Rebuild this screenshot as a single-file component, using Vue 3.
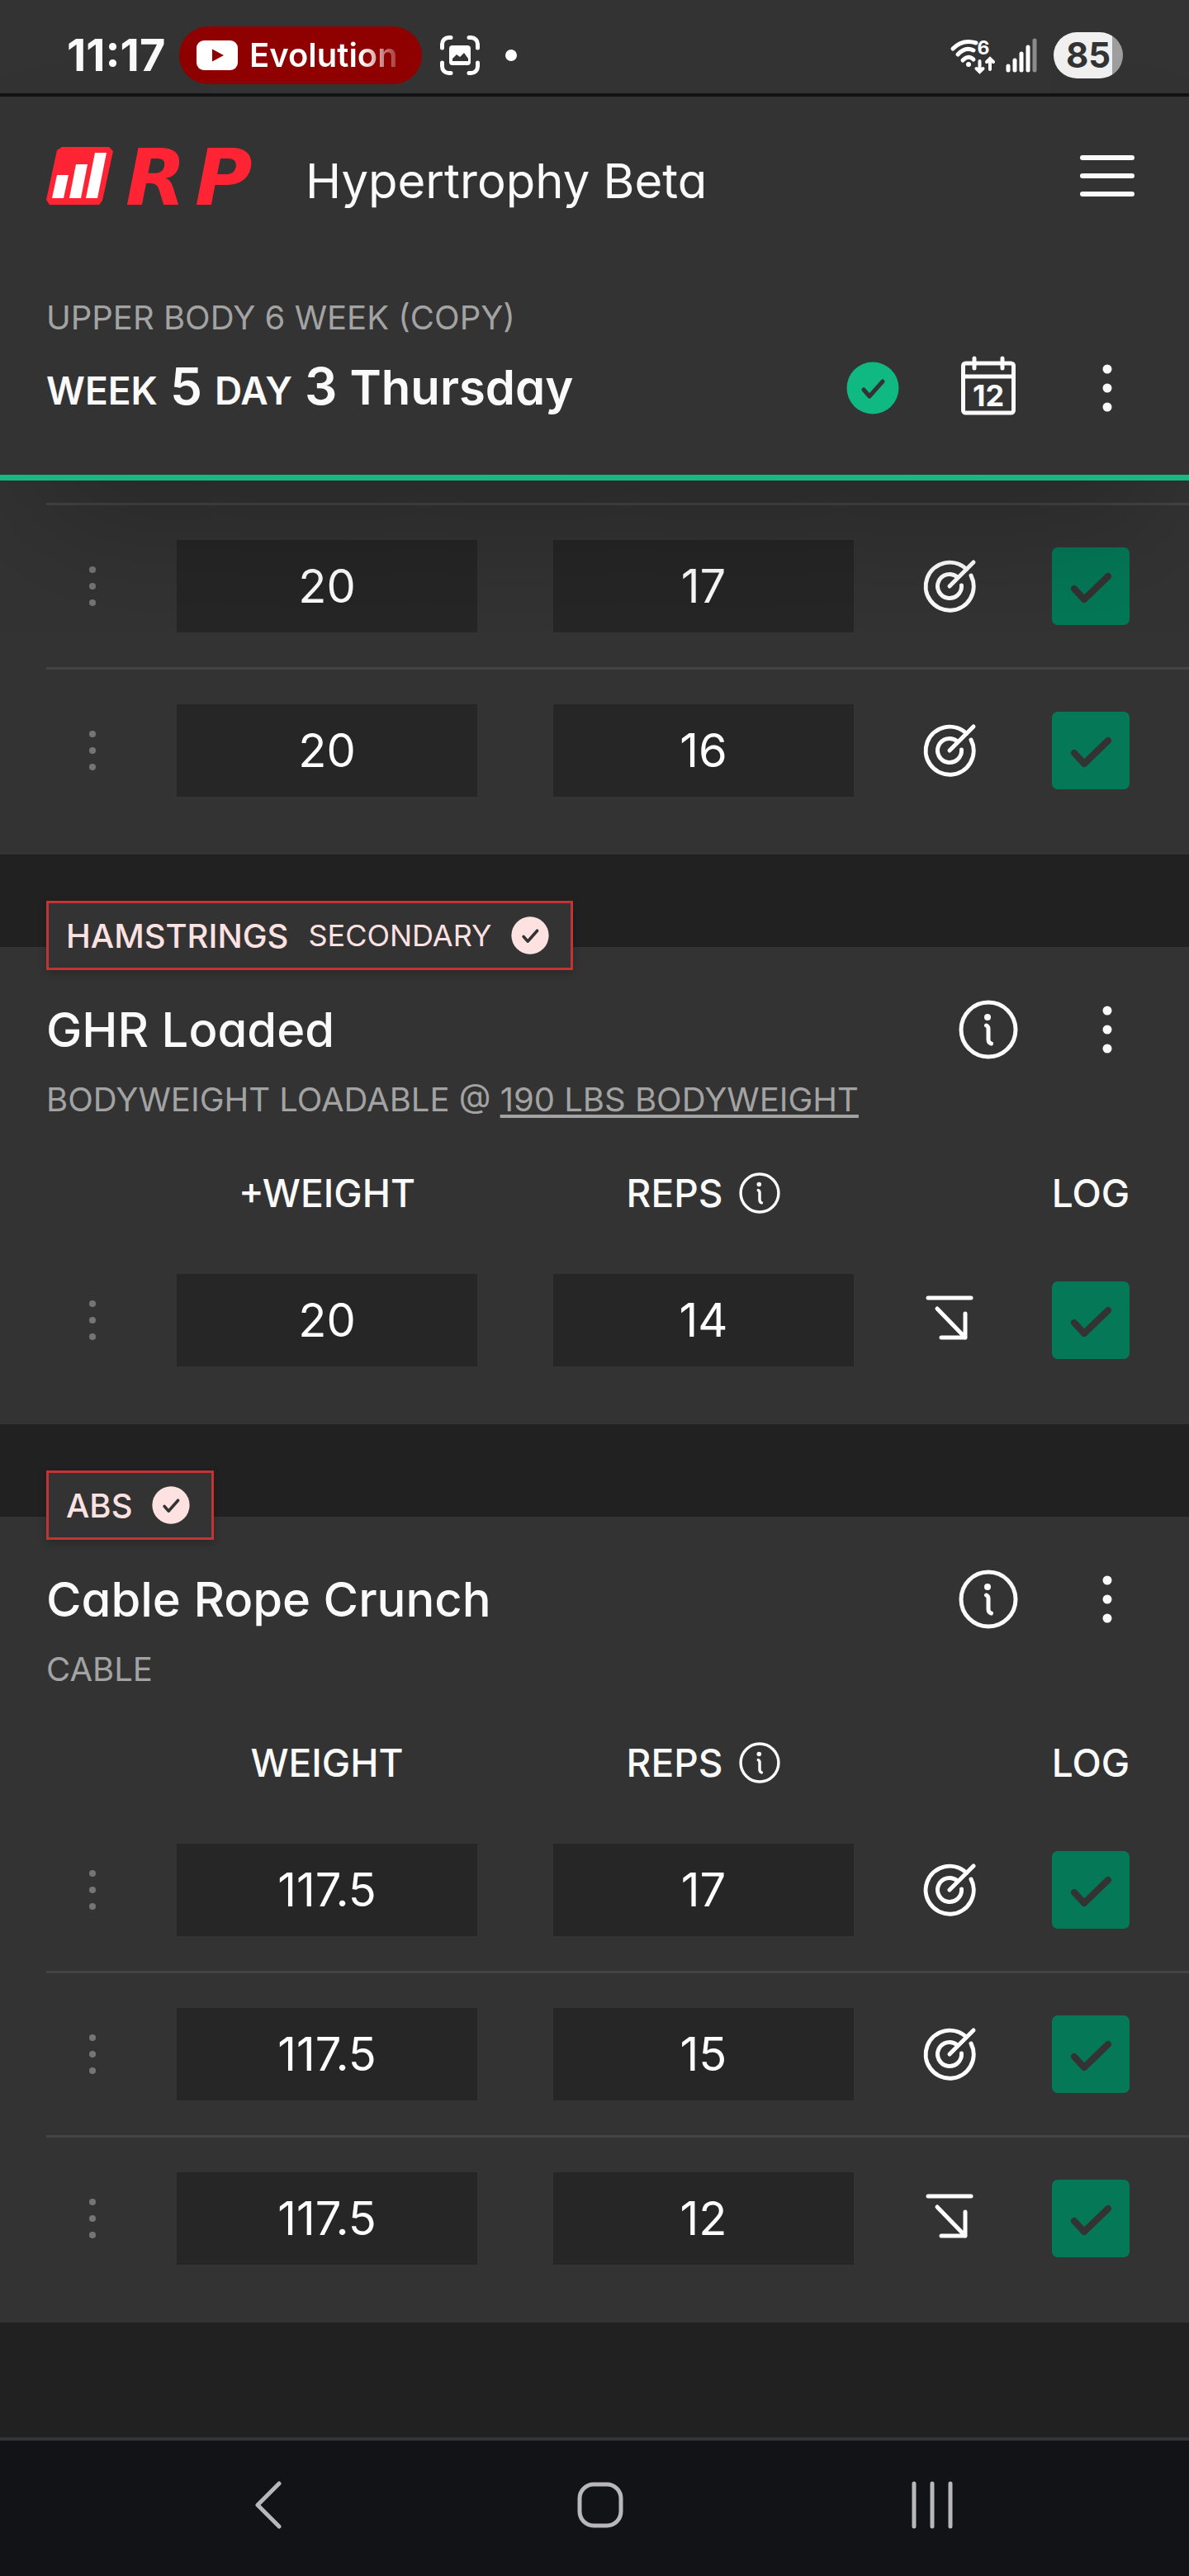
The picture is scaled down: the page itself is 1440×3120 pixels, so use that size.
<script setup>
import { reactive } from "vue";

const previousSets = reactive([
  { weight: "20", reps: "17", result: "target", done: true },
  { weight: "20", reps: "16", result: "target", done: true },
]);

const exercises = reactive([
  {
    id: "ghr",
    muscle: "Hamstrings",
    role: "Secondary",
    name: "GHR Loaded",
    equipment: "Bodyweight loadable @",
    bodyweight: "190 lbs bodyweight",
    weightLabel: "+Weight",
    sets: [{ weight: "20", reps: "14", result: "below", done: true }],
  },
  {
    id: "crunch",
    muscle: "Abs",
    name: "Cable Rope Crunch",
    equipment: "Cable",
    weightLabel: "Weight",
    sets: [
      { weight: "117.5", reps: "17", result: "target", done: true },
      { weight: "117.5", reps: "15", result: "target", done: true },
      { weight: "117.5", reps: "12", result: "below", done: true },
    ],
  },
]);

const blocks = [{ id: "previous", continued: true, sets: previousSets }, ...exercises];

const signalBars = [
  { x: 3, top: 36 },
  { x: 11, top: 29 },
  { x: 19, top: 21 },
  { x: 27, top: 13 },
  { x: 35, top: 5, dim: true },
];
</script>

<template>
  <div class="page">
    <!-- Phone status bar -->
    <div class="status-bar">
      <span class="clock">11:17</span>
      <div class="media-pill">
        <svg viewBox="0 0 50 36" class="media-icon">
          <rect width="50" height="36" rx="9" fill="#fff" />
          <path d="M19 10.5 L33 18 L19 25.5 Z" fill="#8f0000" />
        </svg>
        <span class="media-title">Evolution</span>
      </div>
      <svg viewBox="0 0 48 48" class="capture-icon">
        <path
          d="M2.5 15 V10.5 A8 8 0 0 1 10.5 2.5 H13 M35 2.5 H37.5 A8 8 0 0 1 45.5 10.5 V15 M45.5 33 V37.5 A8 8 0 0 1 37.5 45.5 H35 M13 45.5 H10.5 A8 8 0 0 1 2.5 37.5 V33"
          fill="none"
          stroke="#fff"
          stroke-width="5"
          stroke-linecap="round"
        />
        <rect x="11" y="12" width="26" height="24" rx="4" fill="#fff" />
        <path d="M15 31 V28 L20 23 L24 26 L29 21 L34 28 V31 Z" fill="#333" />
      </svg>
      <span class="notice-dot"></span>

      <div class="status-right">
        <svg viewBox="0 0 60 50" class="wifi-icon">
          <g fill="none" stroke="#fff" stroke-width="5" stroke-linecap="round">
            <path d="M6 17 Q18 5 34 10" />
            <path d="M12 24 Q21 14 31 19" />
            <path d="M18 31 Q25 24 31 30" />
            <path d="M38.5 32 V44 M34.5 41 L38.5 45 L42.5 41" stroke-width="4" />
            <path d="M51 42 V30 M47 33 L51 29 L55 33" stroke-width="4" />
          </g>
          <circle cx="25" cy="36" r="3" fill="#fff" />
          <text x="43" y="24" text-anchor="middle" class="wifi-gen">6</text>
        </svg>
        <svg viewBox="0 0 38 50" class="signal-icon">
          <path
            v-for="bar in signalBars"
            :key="bar.x"
            :d="`M${bar.x} ${bar.top + 2} V43`"
            :stroke="bar.dim ? '#8c8c8c' : '#fff'"
            stroke-width="5"
            stroke-linecap="round"
          />
        </svg>
        <span class="battery">85</span>
      </div>
    </div>

    <header class="top">
      <!-- App bar -->
      <div class="app-bar">
        <a href="#" class="logo" aria-label="RP">
          <svg viewBox="0 0 260 70" class="logo-svg">
            <path
              d="M19 0 H76 L81 5 L68 65 L64 70 H4 L0 64 L13 4 Z"
              fill="#ff2433"
            />
            <path
              d="M13 34 H27 L21 62 H7 Z M36 21 H50 L42 62 H28 Z M59 7 H73 L62 62 H48 Z"
              fill="#fff"
            />
            <text x="96" y="70" class="logo-text">R</text>
            <text x="180" y="70" class="logo-text">P</text>
          </svg>
        </a>
        <h1 class="app-title">Hypertrophy Beta</h1>
        <button type="button" class="icon-btn" aria-label="Menu">
          <svg viewBox="-36 -36 72 72" class="icon">
            <path
              d="M-30 -22 H30 M-30 0 H30 M-30 22 H30"
              stroke="currentColor"
              stroke-width="6"
              stroke-linecap="round"
            />
          </svg>
        </button>
      </div>

      <!-- Current workout -->
      <div class="workout">
        <p class="plan">Upper Body 6 Week (copy)</p>
        <div class="workout-row">
          <h2 class="day">
            <span class="unit">Week</span>
            <span class="count">5</span>
            <span class="unit">Day</span>
            <span class="count">3</span>
            <span>Thursday</span>
          </h2>
          <svg viewBox="-32 -32 64 64" class="day-done">
            <circle r="31.5" fill="#10b981" />
            <path d="M-11 2 L-4 10 L12 -8" class="tick" />
          </svg>
          <button type="button" class="icon-btn" aria-label="Calendar">
            <svg viewBox="0 0 72 72" class="icon">
              <g fill="none" stroke="currentColor" stroke-width="5" stroke-linecap="round">
                <rect x="5.5" y="6" width="61" height="60" rx="3" />
                <path d="M6 22 H66" />
                <path d="M19 0 V12 M53 0 V12" />
              </g>
              <text x="36" y="58" text-anchor="middle" class="calendar-day">12</text>
            </svg>
          </button>
          <button type="button" class="icon-btn" aria-label="Workout options">
            <svg viewBox="-36 -36 72 72" class="icon" fill="currentColor">
              <circle cy="-23" r="5.5" />
              <circle r="5.5" />
              <circle cy="23" r="5.5" />
            </svg>
          </button>
        </div>
      </div>
    </header>

    <main class="exercises">
      <section
        v-for="block in blocks"
        :key="block.id"
        class="exercise"
        :class="{ continued: block.continued }"
      >
        <template v-if="!block.continued">
          <div class="badge">
            <span class="muscle">{{ block.muscle }}</span>
            <span v-if="block.role" class="role">{{ block.role }}</span>
            <svg viewBox="-32 -32 64 64" class="badge-check">
              <circle r="31.5" fill="#fee2e2" />
              <path d="M-11 2 L-4 10 L12 -8" class="tick" />
            </svg>
          </div>

          <div class="exercise-head">
            <h3 class="exercise-name">{{ block.name }}</h3>
            <button type="button" class="icon-btn" aria-label="Exercise info">
              <svg viewBox="-36 -36 72 72" class="icon">
                <g fill="none" stroke="currentColor" stroke-width="5" stroke-linecap="round">
                  <circle r="33" />
                  <path d="M-2.5 -5 Q0 -4 0 -1 V12 Q0 16 3.5 17" />
                </g>
                <circle cx="-1" cy="-15" r="4" fill="currentColor" />
              </svg>
            </button>
            <button type="button" class="icon-btn" aria-label="Exercise options">
              <svg viewBox="-36 -36 72 72" class="icon" fill="currentColor">
                <circle cy="-23" r="5.5" />
                <circle r="5.5" />
                <circle cy="23" r="5.5" />
              </svg>
            </button>
          </div>
          <p class="equipment">
            {{ block.equipment }}
            <a v-if="block.bodyweight" href="#">{{ block.bodyweight }}</a>
          </p>
        </template>

        <table class="sets">
          <colgroup>
            <col class="col-drag" />
            <col />
            <col />
            <col class="col-result" />
            <col class="col-log" />
          </colgroup>
          <thead v-if="!block.continued">
            <tr>
              <td></td>
              <th scope="col">{{ block.weightLabel }}</th>
              <th scope="col">
                <span class="reps-label">
                  Reps
                  <svg viewBox="-36 -36 72 72" class="icon-small">
                    <g fill="none" stroke="currentColor" stroke-width="5" stroke-linecap="round">
                      <circle r="33" />
                      <path d="M-2.5 -5 Q0 -4 0 -1 V12 Q0 16 3.5 17" />
                    </g>
                    <circle cx="-1" cy="-15" r="4" fill="currentColor" />
                  </svg>
                </span>
              </th>
              <td></td>
              <th scope="col" class="log-cell">Log</th>
            </tr>
          </thead>
          <tbody>
            <tr v-for="(set, i) in block.sets" :key="i">
              <td>
                <svg viewBox="-36 -36 72 72" class="icon drag">
                  <circle cy="-20" r="4" />
                  <circle r="4" />
                  <circle cy="20" r="4" />
                </svg>
              </td>
              <td class="field-cell">
                <input v-model="set.weight" type="text" class="field" aria-label="Weight" />
              </td>
              <td class="field-cell">
                <input v-model="set.reps" type="text" class="field" aria-label="Reps" />
              </td>
              <td>
                <svg viewBox="-36 -36 72 72" class="icon result">
                  <template v-if="set.result === 'target'">
                    <path d="M26 -13 A29 29 0 1 1 20.5 -20.5" />
                    <path d="M14.5 -1 A14.5 14.5 0 1 1 9 -11.4" />
                    <path d="M0 0 L29 -29" />
                  </template>
                  <template v-else>
                    <path d="M-26 -27 H26" />
                    <path d="M-15 -14 L19 21 M19 -8 V21 H-10" />
                  </template>
                </svg>
              </td>
              <td class="log-cell">
                <label class="log">
                  <input v-model="set.done" type="checkbox" aria-label="Log set" />
                  <svg v-if="set.done" viewBox="0 0 94 94" class="log-tick">
                    <path d="M27 50 L39 63 L68 35" />
                  </svg>
                </label>
              </td>
            </tr>
          </tbody>
        </table>
      </section>
    </main>

    <!-- System navigation -->
    <nav class="system-nav">
      <button type="button" aria-label="Back">
        <svg viewBox="-30 -30 60 60"><path d="M13 -26 L-13 0 L13 26" /></svg>
      </button>
      <button type="button" aria-label="Home">
        <svg viewBox="-30 -30 60 60">
          <rect x="-25" y="-25" width="50" height="50" rx="17" />
        </svg>
      </button>
      <button type="button" aria-label="Recents">
        <svg viewBox="-30 -30 60 60">
          <path d="M-22 -26 V26 M0 -26 V26 M22 -26 V26" />
        </svg>
      </button>
    </nav>
  </div>
</template>

<style>
body {
  margin: 0;
  background: #212121;
}
</style>

<style scoped>
.page {
  display: flex;
  flex-direction: column;
  min-height: 100vh;
  background: #212121;
  color: #fafafa;
  font-family: Inter, "Liberation Sans", sans-serif;
  font-feature-settings: "cv11";
}

h1,
h2,
h3,
p {
  margin: 0;
}

button {
  padding: 0;
  border: 0;
  background: none;
  color: inherit;
  font: inherit;
  cursor: pointer;
}

svg {
  display: block;
  flex: none;
  overflow: visible;
}

/* Status bar */
.status-bar {
  display: flex;
  align-items: center;
  height: 93px;
  padding: 20px 80px 0 81px;
  background: #333;
  border-bottom: 4px solid #111314;
}

.clock {
  width: 136px;
  font-size: 54px;
  font-weight: 700;
  white-space: nowrap;
}

.media-pill {
  display: flex;
  align-items: center;
  gap: 14px;
  width: 294px;
  height: 70px;
  box-sizing: border-box;
  padding-left: 21px;
  border-radius: 35px;
  background: #8f0000;
}

.media-icon {
  width: 50px;
  height: 36px;
}

.media-title {
  font-size: 40px;
  font-weight: 600;
  background: linear-gradient(90deg, #fff 75%, rgba(255, 255, 255, 0.2));
  background-clip: text;
  color: transparent;
}

.capture-icon {
  width: 48px;
  height: 48px;
  margin-left: 22px;
}

.notice-dot {
  width: 14px;
  height: 14px;
  margin-left: 31px;
  border-radius: 50%;
  background: #fff;
}

.status-right {
  display: flex;
  align-items: center;
  margin-left: auto;
}

.wifi-icon {
  width: 60px;
  height: 50px;
  margin-right: 10px;
}

.wifi-gen {
  fill: #fff;
  font-size: 23px;
  font-weight: 700;
}

.signal-icon {
  width: 38px;
  height: 50px;
  margin-right: 20px;
}

.battery {
  width: 84px;
  height: 56px;
  border-radius: 28px;
  background: linear-gradient(90deg, #f0f0f0 85%, #9e9e9e 85%);
  color: #333;
  font-size: 42px;
  font-weight: 700;
  line-height: 56px;
  text-align: center;
}

/* Header */
.top {
  position: relative;
  z-index: 1;
  background: #333;
  border-bottom: 7px solid #16b981;
  box-shadow: 0 88px 176px -42px rgba(0, 0, 0, 0.25);
}

.app-bar {
  display: flex;
  align-items: center;
  height: 192px;
  padding: 0 63px 0 56px;
}

.logo-svg {
  width: 260px;
  height: 70px;
}

.logo-text {
  fill: #ff2433;
  font-family: "DejaVu Sans", sans-serif;
  font-size: 95px;
  font-style: italic;
  font-weight: 700;
}

.app-title {
  flex: 1;
  margin-left: 54px;
  padding-top: 12px;
  font-size: 58px;
  font-weight: 400;
}

.icon-btn,
.icon {
  width: 72px;
  height: 72px;
}

.workout {
  padding: 48px 63px 69px 56px;
}

.plan,
.equipment {
  color: #a3a3a3;
  font-size: 40px;
  line-height: 56px;
  text-transform: uppercase;
}

.workout-row,
.exercise-head {
  display: flex;
  align-items: center;
  gap: 72px;
  height: 72px;
}

.workout-row {
  margin-top: 21px;
}

.day {
  display: flex;
  flex: 1;
  align-items: baseline;
  gap: 15px;
  font-size: 58px;
  font-weight: 600;
  line-height: 72px;
  white-space: nowrap;
}

.unit {
  font-size: 46px;
  text-transform: uppercase;
}

.count {
  font-size: 62px;
}

.day-done {
  width: 64px;
  height: 64px;
}

.tick {
  fill: none;
  stroke: #333;
  stroke-width: 5;
  stroke-linecap: round;
  stroke-linejoin: round;
}

.calendar-day {
  fill: currentColor;
  font-family: Inter, sans-serif;
  font-size: 36px;
  font-weight: 700;
}

/* Exercises */
.exercises {
  display: flex;
  flex: 1;
  flex-direction: column;
  gap: 112px;
  padding-bottom: 139px;
}

.exercise {
  display: flex;
  flex-direction: column;
  padding-bottom: 28px;
  background: #333;
}

.continued {
  padding-top: 27px;
}

.badge {
  display: flex;
  align-items: center;
  align-self: flex-start;
  gap: 24px;
  height: 84px;
  box-sizing: border-box;
  margin: -56px 0 36px 56px;
  padding: 0 26px 0 21px;
  border: 3px solid #c23434;
  background: #333;
  box-shadow: 0 4px 10px rgba(0, 0, 0, 0.2);
  color: #fee2e2;
  text-transform: uppercase;
}

.muscle {
  font-size: 40px;
  font-weight: 500;
}

.role {
  font-size: 36px;
}

.badge-check {
  width: 46px;
  height: 46px;
}

.exercise-head {
  padding: 0 63px 0 56px;
}

.exercise-name {
  flex: 1;
  font-size: 58px;
  font-weight: 500;
}

.equipment {
  margin-top: 21px;
  padding: 0 56px;
}

.equipment a {
  color: inherit;
  text-decoration-thickness: 4px;
  text-underline-offset: 4px;
}

/* Set table */
.sets {
  width: calc(100% - 56px);
  margin-left: 56px;
  border-spacing: 0;
  table-layout: fixed;
}

.equipment + .sets {
  margin-top: 28px;
}

.col-drag {
  width: 112px;
}

.col-result {
  width: 140px;
}

.col-log {
  width: 220px;
}

.sets th,
.sets td {
  padding: 0;
}

.sets th {
  height: 113px;
  font-size: 46px;
  font-weight: 500;
  text-transform: uppercase;
}

.reps-label {
  display: flex;
  align-items: center;
  justify-content: center;
  gap: 20px;
}

.icon-small {
  width: 50px;
  height: 50px;
}

.sets tbody td {
  padding-top: 42px;
  padding-bottom: 42px;
}

.sets tbody tr + tr td,
.continued tbody td {
  border-top: 3px solid #444;
}

.sets .icon {
  margin: 0 auto;
}

.drag {
  fill: #757575;
}

.sets .field-cell {
  padding-left: 46px;
  padding-right: 46px;
}

.field {
  display: block;
  width: 100%;
  height: 112px;
  box-sizing: border-box;
  padding: 0;
  border: 0;
  background: #262626;
  color: #fff;
  font: inherit;
  font-feature-settings: inherit;
  font-size: 56px;
  text-align: center;
}

.result {
  fill: none;
  stroke: #fff;
  stroke-width: 5;
  stroke-linecap: round;
  stroke-linejoin: round;
}

.sets .log-cell {
  padding-right: 18px;
}

.log {
  display: grid;
  width: 94px;
  height: 94px;
  margin: 0 auto;
}

.log input,
.log-tick {
  grid-area: 1 / 1;
  width: 94px;
  height: 94px;
  margin: 0;
}

.log input {
  appearance: none;
  border-radius: 7px;
  background: #047857;
}

.log-tick {
  fill: none;
  stroke: #333;
  stroke-width: 8;
  stroke-linecap: round;
  stroke-linejoin: round;
  pointer-events: none;
}

/* System navigation */
.system-nav {
  display: flex;
  height: 156px;
  padding: 0 110px 8px 124px;
  border-top: 4px solid #333638;
  background: #121317;
}

.system-nav button {
  display: flex;
  flex: 1;
  align-items: center;
  justify-content: center;
}

.system-nav svg {
  width: 60px;
  height: 60px;
  fill: none;
  stroke: #b8b8bb;
  stroke-width: 5;
  stroke-linecap: round;
  stroke-linejoin: round;
}
</style>
